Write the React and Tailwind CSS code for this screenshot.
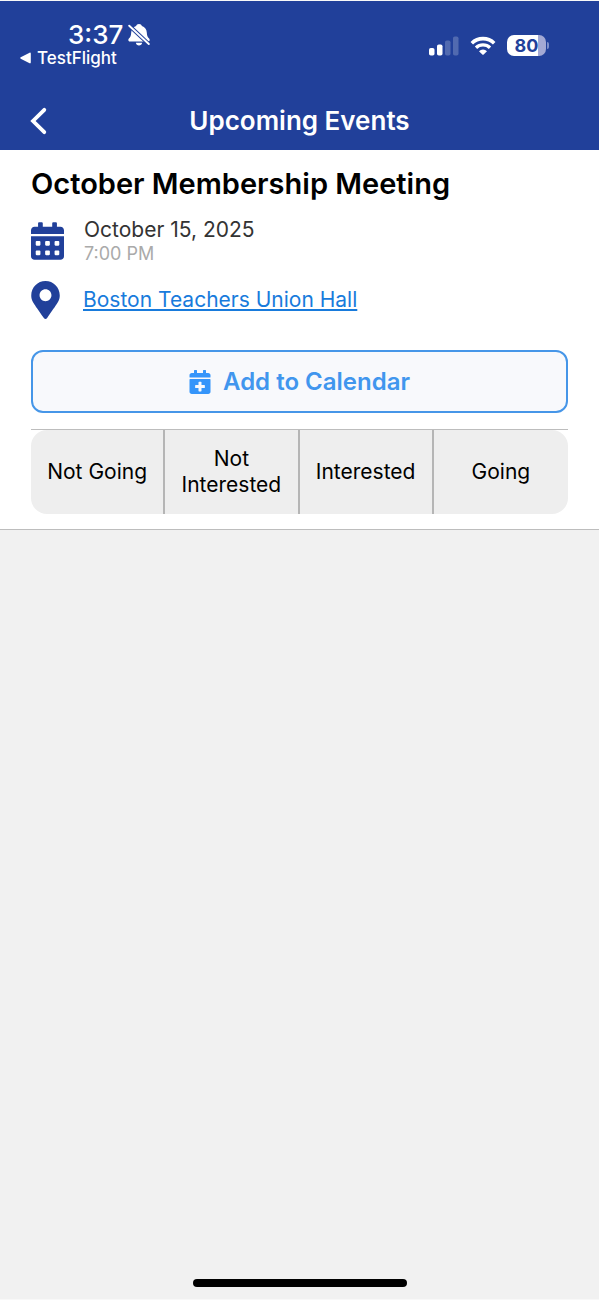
import React from "react";
import { FaCalendarAlt, FaCalendarPlus, FaMapMarkerAlt } from "react-icons/fa";

const responses = ["Not Going", "Not Interested", "Interested", "Going"];

function BellSlashIcon() {
  return (
    <svg viewBox="0 0 22 24" className="h-6 w-[22px]" aria-hidden="true">
      <path
        fill="#fff"
        d="M11 1c1.500 0 2.600.9 2.900 2.100 3 1 4.700 3.300 4.900 6.300.2 3.500.8 4.700 2.300 6.200 1.100 1.200.6 3-1 3H1.900c-1.600 0-2.100-1.800-1-3 1.500-1.500 2.100-2.700 2.300-6.200.2-3 1.900-5.300 4.900-6.300C8.400 1.900 9.500 1 11 1ZM7.900 19.700h6.200c-.2 1.700-1.500 2.800-3.100 2.800s-2.900-1.100-3.100-2.800Z"
      />
      <path d="M-.5 1.100 22.500 22.600" stroke="#21409a" strokeWidth="4" />
      <path d="M1.200 2.700 20.800 21" stroke="#fff" strokeWidth="1.900" strokeLinecap="round" />
    </svg>
  );
}

function SignalIcon() {
  return (
    <svg viewBox="0 0 31 20" className="h-5 w-[31px]" fill="#fff" aria-hidden="true">
      <rect x="1" y="12" width="5.500" height="7.500" rx="1.800" />
      <rect x="9" y="8.500" width="5.500" height="11" rx="1.800" />
      <rect x="17" y="4.500" width="5.500" height="15" rx="1.800" opacity="0.22" />
      <rect x="25" y="0.500" width="5.500" height="19" rx="1.800" opacity="0.22" />
    </svg>
  );
}

function WifiIcon() {
  return (
    <svg viewBox="0 0 26 20" className="h-5 w-[26px]" fill="none" aria-hidden="true">
      <path d="M1.800 7.200a16 16 0 0 1 22.400 0" stroke="#fff" strokeWidth="3.600" />
      <path d="M6 11.700a10 10 0 0 1 14 0" stroke="#fff" strokeWidth="3.300" />
      <path d="M9 15.200a5.700 5.700 0 0 1 8 0l-3.300 3.300a1 1 0 0 1-1.400 0Z" fill="#fff" />
    </svg>
  );
}

function Battery() {
  return (
    <div className="flex items-center gap-px" aria-label="Battery 80%">
      <div className="flex h-[21px] w-[39px] items-center justify-center rounded-[7px] bg-[linear-gradient(90deg,#fff_80%,#a3a9d4_80%)] text-lg leading-5 font-bold text-[#21409a]">
        80
      </div>
      <div className="h-[7px] w-[2px] rounded-r-full bg-[#7d8fcb]" />
    </div>
  );
}

function StatusBar() {
  return (
    <div className="flex items-start justify-between pt-5 pr-[50px] pl-5">
      <div>
        <div className="flex h-7 items-center gap-[5px] pl-12">
          <span className="text-[26px] leading-7 font-medium">3:37</span>
          <BellSlashIcon />
        </div>
        <a href="#testflight" className="flex h-[18px] items-center gap-[6px] text-[17px] leading-[18px] font-medium">
          <svg viewBox="0 0 11 12" className="h-3 w-[11px]" fill="#fff" aria-hidden="true">
            <path d="M10.800 1.400v9.200c0 .7-.6 1-1.200.7L.7 6.700c-.6-.3-.6-1.100 0-1.400L9.600.7c.6-.3 1.200 0 1.200.7Z" />
          </svg>
          TestFlight
        </a>
      </div>
      <div className="flex items-center gap-[11px] pt-[14px]">
        <SignalIcon />
        <WifiIcon />
        <Battery />
      </div>
    </div>
  );
}

export default function App() {
  return (
    <div className="flex min-h-screen flex-col border-y border-[#f8f8f8] bg-[#f1f1f1] font-['Inter','Liberation_Sans',sans-serif] text-black">
      <header className="bg-[#21409a] text-white">
        <StatusBar />
        <div className="grid grid-cols-[48px_1fr_48px] items-center px-5 pt-9 pb-[11px]">
          <button type="button" aria-label="Back" className="flex h-9 items-center pl-[10px]">
            <svg viewBox="0 0 17 28" className="h-7 w-[17px]" fill="none" aria-hidden="true">
              <path d="M14.300 2.800 3 14l11.300 11.200" stroke="#fff" strokeWidth="3.800" strokeLinecap="round" />
            </svg>
          </button>
          <h1 className="text-center text-[26px] leading-9 font-semibold">Upcoming Events</h1>
        </div>
      </header>

      <main className="border-b border-[#bdbdbd] bg-white px-[31px] pt-4 pb-[15px]">
        <h2 className="text-[29px] leading-9 font-semibold">October Membership Meeting</h2>

        <div className="mt-4 flex items-start gap-5">
          <FaCalendarAlt className="mt-1 h-[38px] w-[33px] text-[#21409a]" aria-hidden="true" />
          <div>
            <p className="text-[21px] leading-6 text-[#333]">October 15, 2025</p>
            <p className="text-lg leading-6 text-[#aaa]">7:00 PM</p>
          </div>
        </div>

        <div className="mt-[15px] flex items-center gap-[23px]">
          <FaMapMarkerAlt className="h-[38px] w-[29px] text-[#21409a]" aria-hidden="true" />
          <a href="#location" className="text-[21px] leading-6 text-[#187bdc] underline">
            Boston Teachers Union Hall
          </a>
        </div>

        <button
          type="button"
          className="mt-[31px] flex h-[63px] w-full items-center justify-center gap-3 rounded-xl border-2 border-[#4696e8] bg-[#f8f9fc] text-2xl font-semibold text-[#4196ee]"
        >
          <FaCalendarPlus className="h-6 w-[22px] text-[#3595fa]" aria-hidden="true" />
          Add to Calendar
        </button>

        <div className="mt-4 border-t border-[#bdbdbd]">
          <div className="grid grid-cols-4 divide-x-2 divide-[#b5b5b5] overflow-hidden rounded-2xl bg-[#eee]">
            {responses.map((label) => (
              <button key={label} type="button" className="h-[84px] px-3 text-[21px] leading-[26px]">
                {label}
              </button>
            ))}
          </div>
        </div>
      </main>

      <div className="mx-auto mt-auto mb-3 h-2 w-[214px] rounded-full bg-black" />
    </div>
  );
}
